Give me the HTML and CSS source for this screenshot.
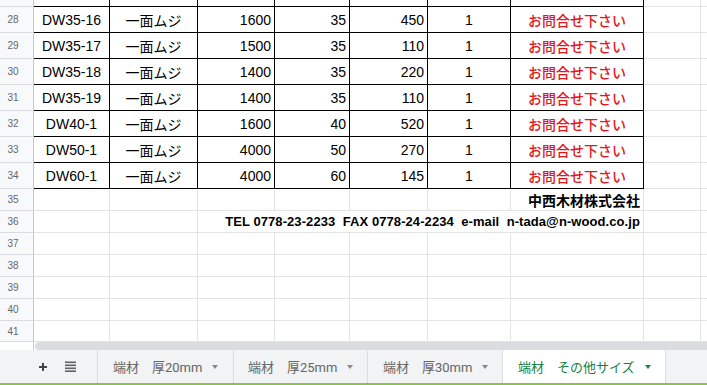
FILE: index.html
```html
<!DOCTYPE html>
<html lang="ja">
<head>
<meta charset="utf-8">
<title>端材 その他サイズ</title>
<link rel="stylesheet" href="styles.css">
</head>
<body>
<div class="sheet">
  <div class="grid">
    <div class="c rh"></div><div class="c t"></div><div class="c t"></div><div class="c t"></div><div class="c t"></div><div class="c t"></div><div class="c t"></div><div class="c t"></div><div class="c"></div><div class="c"></div>

    <div class="c rh">28</div><div class="c t ctr">DW35-16</div><div class="c t ctr jp">一面ムジ</div><div class="c t r">1600</div><div class="c t r">35</div><div class="c t r">450</div><div class="c t ctr">1</div><div class="c t ctr jp red">お問合せ下さい</div><div class="c"></div><div class="c"></div>
    <div class="c rh">29</div><div class="c t ctr">DW35-17</div><div class="c t ctr jp">一面ムジ</div><div class="c t r">1500</div><div class="c t r">35</div><div class="c t r">110</div><div class="c t ctr">1</div><div class="c t ctr jp red">お問合せ下さい</div><div class="c"></div><div class="c"></div>
    <div class="c rh">30</div><div class="c t ctr">DW35-18</div><div class="c t ctr jp">一面ムジ</div><div class="c t r">1400</div><div class="c t r">35</div><div class="c t r">220</div><div class="c t ctr">1</div><div class="c t ctr jp red">お問合せ下さい</div><div class="c"></div><div class="c"></div>
    <div class="c rh">31</div><div class="c t ctr">DW35-19</div><div class="c t ctr jp">一面ムジ</div><div class="c t r">1400</div><div class="c t r">35</div><div class="c t r">110</div><div class="c t ctr">1</div><div class="c t ctr jp red">お問合せ下さい</div><div class="c"></div><div class="c"></div>
    <div class="c rh">32</div><div class="c t ctr">DW40-1</div><div class="c t ctr jp">一面ムジ</div><div class="c t r">1600</div><div class="c t r">40</div><div class="c t r">520</div><div class="c t ctr">1</div><div class="c t ctr jp red">お問合せ下さい</div><div class="c"></div><div class="c"></div>
    <div class="c rh">33</div><div class="c t ctr">DW50-1</div><div class="c t ctr jp">一面ムジ</div><div class="c t r">4000</div><div class="c t r">50</div><div class="c t r">270</div><div class="c t ctr">1</div><div class="c t ctr jp red">お問合せ下さい</div><div class="c"></div><div class="c"></div>
    <div class="c rh">34</div><div class="c t ctr">DW60-1</div><div class="c t ctr jp">一面ムジ</div><div class="c t r">4000</div><div class="c t r">60</div><div class="c t r">145</div><div class="c t ctr">1</div><div class="c t ctr jp red">お問合せ下さい</div><div class="c"></div><div class="c"></div>

    <div class="c rh">35</div><div class="c"></div><div class="c"></div><div class="c"></div><div class="c"></div><div class="c"></div><div class="c"></div><div class="c r jp b">中西木材株式会社</div><div class="c"></div><div class="c"></div>
    <div class="c rh">36</div><div class="c"></div><div class="c"></div><div class="c r b span5 contact">TEL 0778-23-2233  FAX 0778-24-2234  e-mail  n-tada@n-wood.co.jp</div><div class="c"></div><div class="c"></div>
    <div class="c rh">37</div><div class="c"></div><div class="c"></div><div class="c"></div><div class="c"></div><div class="c"></div><div class="c"></div><div class="c"></div><div class="c"></div><div class="c"></div>
    <div class="c rh">38</div><div class="c"></div><div class="c"></div><div class="c"></div><div class="c"></div><div class="c"></div><div class="c"></div><div class="c"></div><div class="c"></div><div class="c"></div>
    <div class="c rh">39</div><div class="c"></div><div class="c"></div><div class="c"></div><div class="c"></div><div class="c"></div><div class="c"></div><div class="c"></div><div class="c"></div><div class="c"></div>
    <div class="c rh">40</div><div class="c"></div><div class="c"></div><div class="c"></div><div class="c"></div><div class="c"></div><div class="c"></div><div class="c"></div><div class="c"></div><div class="c"></div>
    <div class="c rh">41</div><div class="c"></div><div class="c"></div><div class="c"></div><div class="c"></div><div class="c"></div><div class="c"></div><div class="c"></div><div class="c"></div><div class="c"></div>
  </div>

  <div class="hscroll"><div class="corner"></div><div class="thumb"></div></div>

  <div class="tabbar">
    <div class="tools">
      <svg class="plus" width="10" height="10" viewBox="0 0 10 10"><path d="M5 1V9M1 5H9" stroke="#444" stroke-width="2" fill="none"/></svg>
      <svg class="menu" width="11" height="11" viewBox="0 0 11 11"><rect x="0" y="0.5" width="11" height="1.6" fill="#5f6368"/><rect x="0" y="3.5" width="11" height="1.6" fill="#5f6368"/><rect x="0" y="6.5" width="11" height="1.6" fill="#5f6368"/><rect x="0" y="9.4" width="11" height="1.6" fill="#5f6368"/></svg>
    </div>
    <div class="tab w1"><span class="lbl">端材　厚20mm</span><span class="caret"></span></div>
    <div class="tab w2"><span class="lbl">端材　厚25mm</span><span class="caret"></span></div>
    <div class="tab w3"><span class="lbl">端材　厚30mm</span><span class="caret"></span></div>
    <div class="tab active"><span class="lbl">端材　その他サイズ</span><span class="caret"></span></div>
    <div class="rest"></div>
  </div>
</div>
</body>
</html>
```
FILE: styles.css
```css
* { box-sizing: border-box; }
html, body { margin: 0; padding: 0; }
body {
  width: 707px;
  height: 385px;
  overflow: hidden;
  background: #fff;
  font-family: "Liberation Sans", Arial, "Noto Sans CJK JP", sans-serif;
}
.sheet { width: 707px; height: 385px; display: flex; flex-direction: column; }

.grid {
  display: grid;
  grid-template-columns: 34px 76px 88px 77px 75px 78px 83px 133px 57px 1fr;
  grid-template-rows: 7px repeat(7, 26px) repeat(6, 22px) 21px;
  height: 342px;
  flex: none;
}
.c {
  border-right: 1px solid #e2e3e3;
  border-bottom: 1px solid #e2e3e3;
  display: flex;
  align-items: center;
  font-size: 14px;
  color: #000;
  white-space: nowrap;
  overflow: hidden;
  padding: 0 3px;
  min-width: 0;
}
.rh {
  background: #f8f9fa;
  border-right-color: #c4c7c5;
  border-bottom-color: #dadce0;
  justify-content: center;
  font-size: 10px;
  color: #666;
  padding: 0 7px 0 0;
}
.t { border-right-color: #000; border-bottom-color: #000; }
.ctr { justify-content: center; }
.r { justify-content: flex-end; }
.jp { font-family: "Noto Sans CJK JP", "Liberation Sans", sans-serif; }
.red { color: #e3161b; font-weight: 500; }
.b { font-weight: bold; }
.span5 { grid-column: span 5; }
.contact { font-size: 13px; white-space: pre; letter-spacing: 0.08px; }

.hscroll { height: 8px; display: flex; flex: none; }
.corner { width: 34px; background: #fff; border-right: 1px solid #c4c7c5; }
.thumb { flex: 1; background: #dadce0; border-radius: 4px 0 0 4px; margin-left: 1px; }

.tabbar {
  height: 35px;
  flex: none;
  display: flex;
  background: #f1f3f4;
  border-bottom: 2px solid #8bc34a;
  font-family: Roboto, "Noto Sans CJK JP", sans-serif;
  font-size: 13px;
  color: #666;
}
.tools {
  width: 98px;
  display: flex;
  align-items: center;
  border-right: 1px solid #dadce0;
  padding-left: 38px;
}
.plus { margin-right: 17px; }
.tab {
  display: flex;
  align-items: center;
  padding-left: 15px;
  border-right: 1px solid #dadce0;
}
.w1 { width: 136px; }
.w2 { width: 134px; padding-left: 14px; }
.w3 { width: 135px; }
.active { width: 163px; background: #fff; color: #188038; border-right: 1px solid #dadce0; }
.caret {
  width: 0;
  height: 0;
  margin-left: 10px;
  border-left: 3.5px solid transparent;
  border-right: 3.5px solid transparent;
  border-top: 4px solid #888;
}
.active .caret { border-top-color: #188038; }
.rest { flex: 1; }
```
